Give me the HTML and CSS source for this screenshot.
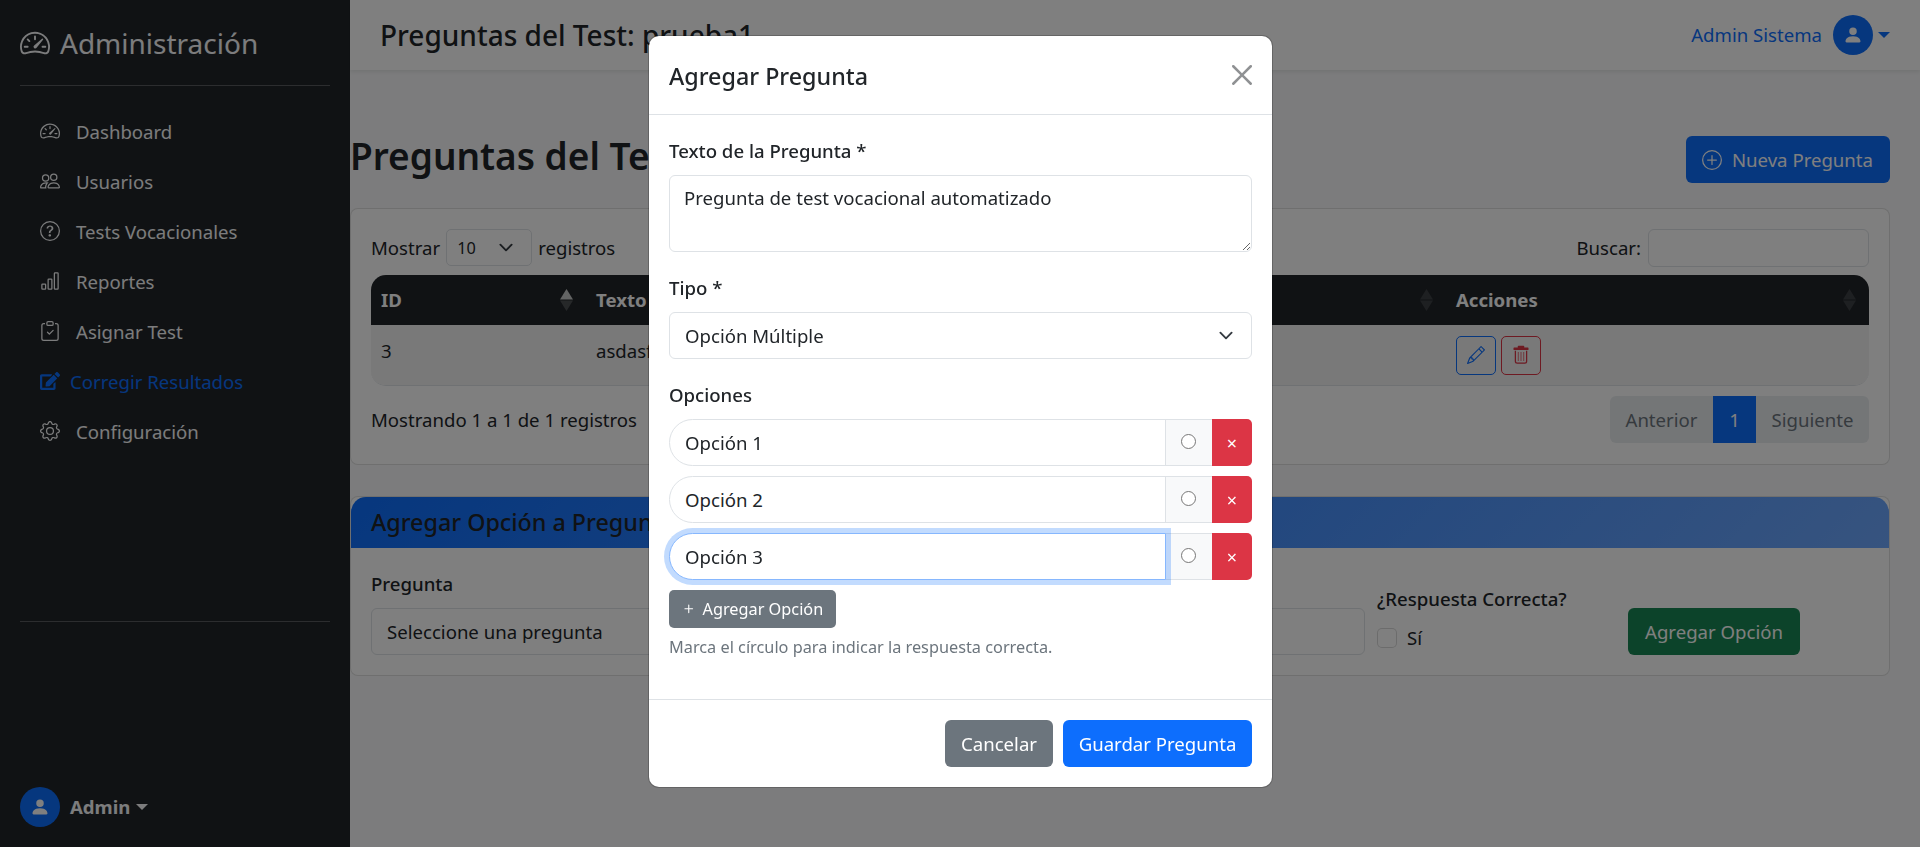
FILE: index.html
```html
<!DOCTYPE html>
<html lang="es">
<head>
    <meta charset="UTF-8">
    <meta name="viewport" content="width=device-width, initial-scale=1.0">
    <title>Preguntas del Test: prueba1</title>
    <link rel="stylesheet" href="styles.css">
</head>
<body>
    <svg class="sprite" xmlns="http://www.w3.org/2000/svg">
        <symbol id="i-speed" viewBox="0 0 16 16">
            <path d="M8 4a.5.5 0 0 1 .5.5V6a.5.5 0 0 1-1 0V4.5A.5.5 0 0 1 8 4zM3.732 5.732a.5.5 0 0 1 .707 0l.915.914a.5.5 0 1 1-.708.708l-.914-.915a.5.5 0 0 1 0-.707zM2 10a.5.5 0 0 1 .5-.5h1.586a.5.5 0 0 1 0 1H2.5A.5.5 0 0 1 2 10zm9.5 0a.5.5 0 0 1 .5-.5h1.5a.5.5 0 0 1 0 1H12a.5.5 0 0 1-.5-.5zm.754-4.246a.389.389 0 0 0-.527-.02L7.547 9.31a.91.91 0 1 0 1.302 1.258l3.434-4.297a.389.389 0 0 0-.029-.518z"/>
            <path fill-rule="evenodd" d="M0 10a8 8 0 1 1 15.547 2.661c-.442 1.253-1.845 1.602-2.932 1.25C11.309 13.488 9.475 13 8 13c-1.474 0-3.31.488-4.615.911-1.087.352-2.49.003-2.932-1.25A7.988 7.988 0 0 1 0 10zm8-7a7 7 0 0 0-6.603 9.329c.203.575.923.876 1.68.63C4.397 12.533 6.358 12 8 12s3.604.532 4.923.96c.757.245 1.477-.056 1.68-.631A7 7 0 0 0 8 3z"/>
        </symbol>
        <symbol id="i-people" viewBox="0 0 16 16">
            <path d="M15 14s1 0 1-1-1-4-5-4-5 3-5 4 1 1 1 1h8Zm-7.978-1A.261.261 0 0 1 7 12.996c.001-.264.167-1.03.76-1.72C8.312 10.629 9.282 10 11 10c1.717 0 2.687.63 3.24 1.276.593.69.758 1.457.76 1.72l-.008.002a.274.274 0 0 1-.014.002H7.022ZM11 7a2 2 0 1 0 0-4 2 2 0 0 0 0 4Zm3-2a3 3 0 1 1-6 0 3 3 0 0 1 6 0ZM6.936 9.28a5.88 5.88 0 0 0-1.23-.247A7.35 7.35 0 0 0 5 9c-4 0-5 3-5 4 0 .667.333 1 1 1h4.216A2.238 2.238 0 0 1 5 13c0-1.01.377-2.042 1.09-2.904.243-.294.526-.569.846-.816ZM4.92 10A5.493 5.493 0 0 0 4 13H1c0-.26.164-1.03.76-1.724.545-.636 1.492-1.256 3.16-1.275ZM1.5 5.5a3 3 0 1 1 6 0 3 3 0 0 1-6 0Zm3-2a2 2 0 1 0 0 4 2 2 0 0 0 0-4Z"/>
        </symbol>
        <symbol id="i-question" viewBox="0 0 16 16">
            <path d="M8 15A7 7 0 1 1 8 1a7 7 0 0 1 0 14zm0 1A8 8 0 1 0 8 0a8 8 0 0 0 0 16z"/>
            <path d="M5.255 5.786a.237.237 0 0 0 .241.247h.825c.138 0 .248-.113.266-.25.09-.656.54-1.134 1.342-1.134.686 0 1.314.343 1.314 1.168 0 .635-.374.927-.965 1.371-.673.489-1.206 1.06-1.168 1.987l.003.217a.25.25 0 0 0 .25.246h.811a.25.25 0 0 0 .25-.25v-.105c0-.718.273-.927 1.01-1.486.609-.463 1.244-.977 1.244-2.056 0-1.511-1.276-2.241-2.673-2.241-1.267 0-2.655.59-2.75 2.286zm1.557 5.763c0 .533.425.927 1.01.927.609 0 1.028-.394 1.028-.927 0-.552-.42-.94-1.029-.94-.584 0-1.009.388-1.009.94z"/>
        </symbol>
        <symbol id="i-chart" viewBox="0 0 16 16">
            <path d="M4 11H2v3h2v-3zm5-4H7v7h2V7zm5-5v12h-2V2h2zm-2-1a1 1 0 0 0-1 1v12a1 1 0 0 0 1 1h2a1 1 0 0 0 1-1V2a1 1 0 0 0-1-1h-2zM6 7a1 1 0 0 1 1-1h2a1 1 0 0 1 1 1v7a1 1 0 0 1-1 1H7a1 1 0 0 1-1-1V7zm-5 4a1 1 0 0 1 1-1h2a1 1 0 0 1 1 1v3a1 1 0 0 1-1 1H2a1 1 0 0 1-1-1v-3z"/>
        </symbol>
        <symbol id="i-clipboard" viewBox="0 0 16 16">
            <path fill-rule="evenodd" d="M10.854 7.146a.5.5 0 0 1 0 .708l-3 3a.5.5 0 0 1-.708 0l-1.5-1.5a.5.5 0 1 1 .708-.708L7.5 9.793l2.646-2.647a.5.5 0 0 1 .708 0z"/>
            <path d="M4 1.5H3a2 2 0 0 0-2 2V14a2 2 0 0 0 2 2h10a2 2 0 0 0 2-2V3.5a2 2 0 0 0-2-2h-1v1h1a1 1 0 0 1 1 1V14a1 1 0 0 1-1 1H3a1 1 0 0 1-1-1V3.5a1 1 0 0 1 1-1h1v-1z"/>
            <path d="M9.5 1a.5.5 0 0 1 .5.5v1a.5.5 0 0 1-.5.5h-3a.5.5 0 0 1-.5-.5v-1a.5.5 0 0 1 .5-.5h3zm-3-1A1.5 1.5 0 0 0 5 1.5v1A1.5 1.5 0 0 0 6.5 4h3A1.5 1.5 0 0 0 11 2.5v-1A1.5 1.5 0 0 0 9.5 0h-3z"/>
        </symbol>
        <symbol id="i-edit" viewBox="0 0 576 512">
            <path d="M402.6 83.2l90.2 90.2c3.8 3.8 3.8 10 0 13.8L274.4 405.6l-92.8 10.3c-12.4 1.4-22.9-9.1-21.5-21.5l10.3-92.8L388.8 83.2c3.8-3.8 10-3.8 13.8 0zm162-22.9l-48.8-48.8c-15.2-15.2-39.9-15.2-55.2 0l-35.4 35.4c-3.8 3.8-3.8 10 0 13.8l90.2 90.2c3.8 3.8 10 3.8 13.8 0l35.4-35.4c15.2-15.3 15.2-40 0-55.2zM384 346.2V448H64V128h229.8c3.2 0 6.2-1.3 8.5-3.5l40-40c7.6-7.6 2.2-20.5-8.5-20.5H48C21.5 64 0 85.5 0 112v352c0 26.5 21.5 48 48 48h352c26.5 0 48-21.5 48-48V306.2c0-10.7-12.9-16-20.5-8.5l-40 40c-2.2 2.3-3.5 5.3-3.5 8.5z"/>
        </symbol>
        <symbol id="i-gear" viewBox="0 0 16 16">
            <path d="M8 4.754a3.246 3.246 0 1 0 0 6.492 3.246 3.246 0 0 0 0-6.492zM5.754 8a2.246 2.246 0 1 1 4.492 0 2.246 2.246 0 0 1-4.492 0z"/>
            <path d="M9.796 1.343c-.527-1.79-3.065-1.79-3.592 0l-.094.319a.873.873 0 0 1-1.255.52l-.292-.16c-1.64-.892-3.433.902-2.54 2.541l.159.292a.873.873 0 0 1-.52 1.255l-.319.094c-1.79.527-1.79 3.065 0 3.592l.319.094a.873.873 0 0 1 .52 1.255l-.16.292c-.892 1.64.901 3.434 2.541 2.54l.292-.159a.873.873 0 0 1 1.255.52l.094.319c.527 1.79 3.065 1.79 3.592 0l.094-.319a.873.873 0 0 1 1.255-.52l.292.16c1.64.893 3.434-.902 2.54-2.541l-.159-.292a.873.873 0 0 1 .52-1.255l.319-.094c1.79-.527 1.79-3.065 0-3.592l-.319-.094a.873.873 0 0 1-.52-1.255l.16-.292c.893-1.64-.902-3.433-2.541-2.54l-.292.159a.873.873 0 0 1-1.255-.52l-.094-.319zm-2.633.283c.246-.835 1.428-.835 1.674 0l.094.319a1.873 1.873 0 0 0 2.693 1.115l.291-.16c.764-.415 1.6.42 1.184 1.185l-.159.292a1.873 1.873 0 0 0 1.116 2.692l.318.094c.835.246.835 1.428 0 1.674l-.319.094a1.873 1.873 0 0 0-1.115 2.693l.16.291c.415.764-.42 1.6-1.185 1.184l-.291-.159a1.873 1.873 0 0 0-2.693 1.116l-.094.318c-.246.835-1.428.835-1.674 0l-.094-.319a1.873 1.873 0 0 0-2.692-1.115l-.292.16c-.764.415-1.6-.42-1.184-1.185l.159-.291A1.873 1.873 0 0 0 1.945 8.93l-.319-.094c-.835-.246-.835-1.428 0-1.674l.319-.094A1.873 1.873 0 0 0 3.06 4.377l-.16-.292c-.415-.764.42-1.6 1.185-1.184l.292.159a1.873 1.873 0 0 0 2.692-1.115l.094-.319z"/>
        </symbol>
        <symbol id="i-person" viewBox="0 0 16 16">
            <path d="M3 14s-1 0-1-1 1-4 6-4 6 3 6 4-1 1-1 1H3Zm5-6a3 3 0 1 0 0-6 3 3 0 0 0 0 6Z"/>
        </symbol>
        <symbol id="i-plus-circle" viewBox="0 0 16 16">
            <path d="M8 15A7 7 0 1 1 8 1a7 7 0 0 1 0 14zm0 1A8 8 0 1 0 8 0a8 8 0 0 0 0 16z"/>
            <path d="M8 4a.5.5 0 0 1 .5.5v3h3a.5.5 0 0 1 0 1h-3v3a.5.5 0 0 1-1 0v-3h-3a.5.5 0 0 1 0-1h3v-3A.5.5 0 0 1 8 4z"/>
        </symbol>
        <symbol id="i-plus" viewBox="0 0 16 16">
            <path d="M8 4a.5.5 0 0 1 .5.5v3h3a.5.5 0 0 1 0 1h-3v3a.5.5 0 0 1-1 0v-3h-3a.5.5 0 0 1 0-1h3v-3A.5.5 0 0 1 8 4z"/>
        </symbol>
        <symbol id="i-pencil" viewBox="0 0 16 16">
            <path d="M12.146.146a.5.5 0 0 1 .708 0l3 3a.5.5 0 0 1 0 .708l-10 10a.5.5 0 0 1-.168.11l-5 2a.5.5 0 0 1-.65-.65l2-5a.5.5 0 0 1 .11-.168l10-10zM11.207 2.5 13.5 4.793 14.793 3.5 12.5 1.207 11.207 2.5zm1.586 3L10.5 3.207 4 9.707V10h.5a.5.5 0 0 1 .5.5v.5h.5a.5.5 0 0 1 .5.5v.5h.293l6.5-6.5zm-9.761 5.175-.106.106-1.528 3.821 3.821-1.528.106-.106A.5.5 0 0 1 5 12.5V12h-.5a.5.5 0 0 1-.5-.5V11h-.5a.5.5 0 0 1-.468-.325z"/>
        </symbol>
        <symbol id="i-trash" viewBox="0 0 16 16">
            <path d="M6 .6h4a.6.6 0 0 1 .6.6v.8h2.9a.5.5 0 0 1 .5.5v1a.5.5 0 0 1-.5.5h-11a.5.5 0 0 1-.5-.5v-1a.5.5 0 0 1 .5-.5h2.9v-.8A.6.6 0 0 1 6 .6Z"/>
            <path d="M3 4.5h1V13a1 1 0 0 0 1 1h6a1 1 0 0 0 1-1V4.5h1V13a2 2 0 0 1-2 2H5a2 2 0 0 1-2-2V4.5Z"/>
            <path opacity=".55" d="M5.4 5.6h1v7.2h-1zM7.5 5.6h1v7.2h-1zM9.6 5.6h1v7.2h-1z"/>
        </symbol>
        <symbol id="i-close" viewBox="0 0 16 16">
            <path d="M.293.293a1 1 0 0 1 1.414 0L8 6.586 14.293.293a1 1 0 1 1 1.414 1.414L9.414 8l6.293 6.293a1 1 0 0 1-1.414 1.414L8 9.414l-6.293 6.293a1 1 0 0 1-1.414-1.414L6.586 8 .293 1.707a1 1 0 0 1 0-1.414z"/>
        </symbol>
        <symbol id="i-sort" viewBox="0 0 13 22">
            <path opacity=".13" d="M6.5 0 13 10.5H0z"/>
            <path opacity=".13" d="M6.5 22 0 11.5h13z"/>
        </symbol>
        <symbol id="i-sort-asc" viewBox="0 0 13 22">
            <path opacity=".75" d="M6.5 0 13 10.5H0z"/>
            <path opacity=".2" d="M6.5 22 0 11.5h13z"/>
        </symbol>
    </svg>

    <div class="layout">
        <aside class="sidebar">
            <div class="brand">
                <svg class="icon brand-icon"><use href="#i-speed"/></svg>
                <span>Administración</span>
            </div>
            <hr class="side-rule">
            <nav class="side-nav">
                <a class="side-link" href="#"><svg class="icon"><use href="#i-speed"/></svg><span>Dashboard</span></a>
                <a class="side-link" href="#"><svg class="icon"><use href="#i-people"/></svg><span>Usuarios</span></a>
                <a class="side-link" href="#"><svg class="icon"><use href="#i-question"/></svg><span>Tests Vocacionales</span></a>
                <a class="side-link" href="#"><svg class="icon"><use href="#i-chart"/></svg><span>Reportes</span></a>
                <a class="side-link" href="#"><svg class="icon"><use href="#i-clipboard"/></svg><span>Asignar Test</span></a>
                <a class="side-link active" href="#"><svg class="icon"><use href="#i-edit"/></svg><span>Corregir Resultados</span></a>
                <a class="side-link" href="#"><svg class="icon"><use href="#i-gear"/></svg><span>Configuración</span></a>
            </nav>
            <hr class="side-rule">
            <div class="side-user">
                <span class="avatar"><svg class="icon"><use href="#i-person"/></svg></span>
                <strong>Admin</strong>
                <span class="caret"></span>
            </div>
        </aside>

        <div class="main">
            <header class="topbar">
                <h3 class="topbar-title">Preguntas del Test: prueba1</h3>
                <div class="topbar-user">
                    <span>Admin Sistema</span>
                    <span class="avatar"><svg class="icon"><use href="#i-person"/></svg></span>
                    <span class="caret caret-blue"></span>
                </div>
            </header>

            <div class="content">
                <div class="page-head">
                    <h1>Preguntas del Test: prueba1</h1>
                    <a class="btn btn-primary btn-new" href="#"><svg class="icon"><use href="#i-plus-circle"/></svg>Nueva Pregunta</a>
                </div>

                <section class="card">
                    <div class="card-body">
                        <div class="dt-row">
                            <label class="dt-length">Mostrar
                                <select class="form-select select-sm"><option>10</option></select>
                                registros</label>
                            <label class="dt-search">Buscar: <input class="form-control search-input" type="text"></label>
                        </div>
                        <div class="table-wrap">
                            <table class="table">
                                <thead>
                                    <tr>
                                        <th class="col-id"><div class="th-in">ID<svg class="sort"><use href="#i-sort-asc"/></svg></div></th>
                                        <th class="col-text"><div class="th-in">Texto<svg class="sort"><use href="#i-sort"/></svg></div></th>
                                        <th class="col-type"><div class="th-in">Tipo<svg class="sort"><use href="#i-sort"/></svg></div></th>
                                        <th><div class="th-in">Acciones<svg class="sort"><use href="#i-sort"/></svg></div></th>
                                    </tr>
                                </thead>
                                <tbody>
                                    <tr>
                                        <td>3</td>
                                        <td>asdasfasdf</td>
                                        <td>Opción Múltiple</td>
                                        <td>
                                            <div class="row-actions">
                                                <button class="btn-act act-edit"><svg class="icon"><use href="#i-pencil"/></svg></button>
                                                <button class="btn-act act-del"><svg class="icon"><use href="#i-trash"/></svg></button>
                                            </div>
                                        </td>
                                    </tr>
                                </tbody>
                            </table>
                        </div>
                        <div class="dt-foot">
                            <span>Mostrando 1 a 1 de 1 registros</span>
                            <div class="pager">
                                <a class="page-link page-prev" href="#">Anterior</a>
                                <a class="page-link current" href="#">1</a>
                                <a class="page-link page-next" href="#">Siguiente</a>
                            </div>
                        </div>
                    </div>
                </section>

                <section class="card card-option">
                    <div class="card-head">
                        <h5>Agregar Opción a Pregunta</h5>
                    </div>
                    <div class="card-body option-form">
                        <div class="field">
                            <label class="form-label">Pregunta</label>
                            <select class="form-select"><option>Seleccione una pregunta</option></select>
                        </div>
                        <div class="field">
                            <label class="form-label">Texto de la Opción</label>
                            <input class="form-control" type="text">
                        </div>
                        <div class="field">
                            <label class="form-label label-check">¿Respuesta Correcta?</label>
                            <label class="check-line"><input class="check" type="checkbox">Sí</label>
                        </div>
                        <button class="btn btn-success">Agregar Opción</button>
                    </div>
                </section>
            </div>
        </div>
    </div>

    <div class="backdrop"></div>

    <div class="modal">
        <div class="modal-head">
            <h5>Agregar Pregunta</h5>
            <svg class="icon btn-close"><use href="#i-close"/></svg>
        </div>
        <div class="modal-body">
            <label class="form-label">Texto de la Pregunta *</label>
            <textarea class="form-control area">Pregunta de test vocacional automatizado</textarea>

            <label class="form-label">Tipo *</label>
            <select class="form-select select-type"><option>Opción Múltiple</option></select>

            <label class="form-label">Opciones</label>
            <div class="option-list">
                <div class="option-row">
                    <input class="form-control option-input" type="text" value="Opción 1">
                    <span class="option-radio"><input type="radio" name="correcta"></span>
                    <button class="option-del">×</button>
                </div>
                <div class="option-row">
                    <input class="form-control option-input" type="text" value="Opción 2">
                    <span class="option-radio"><input type="radio" name="correcta"></span>
                    <button class="option-del">×</button>
                </div>
                <div class="option-row">
                    <input class="form-control option-input focused" type="text" value="Opción 3">
                    <span class="option-radio"><input type="radio" name="correcta"></span>
                    <button class="option-del">×</button>
                </div>
            </div>
            <button class="btn btn-secondary btn-sm"><svg class="icon"><use href="#i-plus"/></svg>Agregar Opción</button>
            <div class="help">Marca el círculo para indicar la respuesta correcta.</div>
        </div>
        <div class="modal-foot">
            <button class="btn btn-secondary btn-cancel">Cancelar</button>
            <button class="btn btn-primary btn-save">Guardar Pregunta</button>
        </div>
    </div>
</body>
</html>
```
FILE: styles.css
```css
* {
    box-sizing: border-box;
}

body {
    margin: 0;
    height: 847px;
    overflow: hidden;
    background: #f8f9fa;
    color: #212529;
    font-family: "Noto Sans", "Open Sans", sans-serif;
    font-size: 18.6px;
    line-height: 30px;
}

h1, h3, h5 {
    margin: 0;
}

a {
    text-decoration: none;
}

.sprite {
    display: none;
}

.icon {
    display: block;
    width: 20px;
    height: 20px;
    flex: none;
    fill: currentColor;
}

.layout {
    display: flex;
    height: 847px;
}

/* sidebar */
.sidebar {
    width: 350px;
    flex: none;
    display: flex;
    flex-direction: column;
    padding: 20px;
    background: #212529;
    color: #f8f9fa;
}

.brand {
    display: flex;
    align-items: center;
    gap: 10px;
    height: 45px;
    font-size: 28px;
    line-height: 45px;
}

.brand span {
    padding-top: 1px;
}

.brand-icon {
    width: 30px;
    height: 30px;
}

.side-rule {
    width: 100%;
    margin: 20px 0;
    border: 0;
    border-top: 1px solid rgba(255, 255, 255, .25);
}

.side-nav {
    height: 495px;
}

.side-link {
    display: flex;
    align-items: center;
    gap: 16px;
    height: 50px;
    padding: 0 20px;
    color: #f8f9fa;
}

.side-link span {
    padding-top: 2px;
}

.side-link.active {
    gap: 10px;
    color: #0d6efd;
}

.side-user {
    display: flex;
    align-items: center;
    margin-top: auto;
    gap: 10px;
}

.avatar {
    display: flex;
    align-items: center;
    justify-content: center;
    width: 40px;
    height: 40px;
    border-radius: 50%;
    background: #0d6efd;
    color: #fff;
}

.caret {
    width: 0;
    height: 0;
    margin-left: -4px;
    border-top: 6px solid currentColor;
    border-left: 6px solid transparent;
    border-right: 6px solid transparent;
}

.caret-blue {
    margin-left: -6px;
    color: #0d6efd;
}

/* main area */
.main {
    flex: 1;
    min-width: 0;
}

.topbar {
    display: flex;
    align-items: center;
    justify-content: space-between;
    height: 70px;
    padding: 0 30px;
    background: #fff;
    box-shadow: 0 2px 4px rgba(0, 0, 0, .08);
}

.topbar-title {
    font-size: 28px;
    font-weight: 500;
    line-height: 36px;
}

.topbar-user {
    display: flex;
    align-items: center;
    gap: 11px;
    color: #0d6efd;
}

.content {
    padding: 66px 30px 0 0;
}

.page-head {
    display: flex;
    align-items: center;
    justify-content: space-between;
    height: 47px;
    margin-bottom: 25px;
}

h1 {
    margin-top: -7px;
    font-size: 37px;
    font-weight: 600;
    line-height: 50px;
    white-space: nowrap;
}

.btn {
    display: inline-flex;
    align-items: center;
    justify-content: center;
    height: 47px;
    padding: 0 15px;
    border: 1px solid transparent;
    border-radius: 6px;
    font: inherit;
    color: #fff;
}

.btn-primary {
    background: #0d6efd;
}

.btn-secondary {
    background: #6c757d;
}

.btn-success {
    background: #198754;
}

.btn-new {
    gap: 10px;
    padding: 0 16px 0 15px;
}

.btn-cancel {
    width: 108px;
    padding: 0;
}

.btn-save {
    width: 189px;
    padding: 0;
}

.btn-sm {
    height: 38px;
    padding: 0 12px 0 10px;
    gap: 5px;
    font-size: 16.3px;
    border-radius: 5px;
}

.btn-sm .icon {
    width: 17.5px;
    height: 17.5px;
}

.card {
    border: 1px solid rgba(0, 0, 0, .125);
    border-radius: 8px;
    background: #fff;
}

.card-body {
    padding: 20px;
}

.card-option {
    margin-top: 31px;
}

.card-head {
    height: 51px;
    padding: 0 20px;
    border-radius: 15px 15px 0 0;
    background: linear-gradient(135deg, #0d6efd, #6ea8fe);
}

.card-head h5 {
    font-size: 23.3px;
    font-weight: 500;
    line-height: 51px;
}

/* forms */
.form-control,
.form-select {
    display: block;
    width: 100%;
    height: 47px;
    padding: 0 15px;
    border: 1px solid #dee2e6;
    border-radius: 6px;
    background-color: #fff;
    color: #212529;
    font: inherit;
    outline: none;
}

.form-select {
    appearance: none;
    padding-right: 45px;
    background-image: url("data:image/svg+xml,%3csvg xmlns='http://www.w3.org/2000/svg' viewBox='0 0 16 16'%3e%3cpath fill='none' stroke='%23343a40' stroke-linecap='round' stroke-linejoin='round' stroke-width='2' d='m2 5 6 6 6-6'/%3e%3c/svg%3e");
    background-repeat: no-repeat;
    background-position: right 15px center;
    background-size: 20px 15px;
}

.form-label {
    display: block;
    margin-bottom: 10px;
    font-weight: 500;
}

/* datatable */
.dt-row {
    display: flex;
    justify-content: space-between;
    align-items: center;
    height: 37px;
    margin-bottom: 9px;
}

.dt-length {
    display: flex;
    align-items: center;
    gap: 6px;
}

.select-sm {
    width: 86px;
    height: 37px;
    padding: 0 10px;
    font-size: 16.3px;
    border-radius: 5px;
}

.dt-search {
    display: flex;
    align-items: center;
    gap: 7px;
}

.search-input {
    width: 221px;
    height: 38px;
}

.table-wrap {
    overflow: hidden;
    border-bottom: 1px solid #dee2e6;
    border-radius: 15px;
}

.table {
    width: 100%;
    table-layout: fixed;
    border-collapse: collapse;
}

.table th {
    height: 50px;
    padding: 0 10px;
    background: #212529;
    color: #fff;
    text-align: left;
    font-weight: 700;
}

.col-id {
    width: 215px;
}

.col-text {
    width: 430px;
}

.col-type {
    width: 430px;
}

.th-in {
    display: flex;
    align-items: center;
    justify-content: space-between;
}

.sort {
    width: 13px;
    height: 22px;
    margin-right: 3px;
    fill: #fff;
}

.table td {
    height: 60px;
    padding: 0 10px 8px;
    background: #f2f2f2;
}

.row-actions {
    display: flex;
    gap: 5px;
    margin-top: 8px;
}

.btn-act {
    display: flex;
    align-items: center;
    justify-content: center;
    width: 40px;
    height: 39px;
    padding: 0;
    border: 1px solid;
    border-radius: 5px;
    background: transparent;
}

.act-edit {
    color: #0d6efd;
}

.act-edit .icon {
    width: 18px;
    height: 18px;
}

.act-del {
    color: #dc3545;
}

.dt-foot {
    display: flex;
    justify-content: space-between;
    align-items: center;
    margin: 10px 0 1px;
}

.pager {
    display: flex;
    height: 47px;
    border-radius: 6px;
    overflow: hidden;
    background: #e9ecef;
}

.page-link {
    display: flex;
    align-items: center;
    justify-content: center;
    width: 43px;
    color: #6c757d;
}

.page-prev {
    width: 103px;
}

.page-next {
    width: 113px;
}

.page-link.current {
    background: #0d6efd;
    color: #fff;
}

/* add option form */
.option-form {
    display: grid;
    grid-template-columns: 492px 490px 239px 172px;
    column-gap: 12px;
    align-items: end;
    padding-top: 21px;
}

.field .form-label {
    margin-bottom: 9px;
}

.field .label-check {
    margin-bottom: 10px;
}

.check-line {
    display: flex;
    align-items: center;
    gap: 10px;
    height: 27px;
    margin-bottom: 4px;
}

.check {
    appearance: none;
    width: 20px;
    height: 20px;
    margin: 0;
    border: 1px solid rgba(0, 0, 0, .15);
    border-radius: 5px;
    background: #fff;
}

/* modal */
.backdrop {
    position: fixed;
    inset: 0;
    background: rgba(0, 0, 0, .5);
}

.modal {
    position: absolute;
    top: 36px;
    left: calc(50% - 311px);
    width: 623px;
    height: 751px;
    display: flex;
    flex-direction: column;
    border-radius: 10px;
    background: #fff;
    box-shadow: 0 0 0 1px rgba(0, 0, 0, .2);
}

.modal-head {
    display: flex;
    align-items: center;
    justify-content: space-between;
    height: 79px;
    padding: 0 20px;
    border-bottom: 1px solid #dee2e6;
}

.modal-head h5 {
    padding-top: 2px;
    font-size: 23.3px;
    font-weight: 500;
    line-height: 36px;
}

.btn-close {
    opacity: .5;
}

.modal-body {
    flex: 1;
    padding: 21px 20px 20px;
}

.area {
    height: 77px;
    margin-top: -1px;
    padding: 7px 14px;
    margin-bottom: 21px;
    resize: vertical;
}

.select-type {
    margin-bottom: 21px;
}

.modal-body .form-label + .select-type {
    margin-top: -1px;
}

.option-list {
    display: flex;
    flex-direction: column;
    gap: 10px;
    margin-top: -1px;
    margin-bottom: 10px;
}

.option-row {
    display: flex;
    height: 47px;
}

.option-input {
    flex: 1;
    min-width: 0;
    border-radius: 24px 0 0 24px;
}

.option-input.focused {
    position: relative;
    z-index: 1;
    border-color: #86b7fe;
    box-shadow: 0 0 0 5px rgba(13, 110, 253, .25);
}

.option-radio {
    display: flex;
    align-items: center;
    justify-content: center;
    width: 47px;
    flex: none;
    margin-left: -1px;
    border: 1px solid #dee2e6;
    border-right: 0;
    background: #f8f9fa;
}

.option-radio input {
    width: 15px;
    height: 15px;
    margin: 0 1px 3px 0;
}

.option-del {
    width: 40px;
    flex: none;
    padding: 0;
    border: 0;
    border-radius: 0 5px 5px 0;
    background: #dc3545;
    color: #fff;
    font: inherit;
    font-size: 18px;
}

.help {
    margin-top: 6px;
    font-size: 16.3px;
    line-height: 26px;
    color: #6c757d;
}

.modal-foot {
    display: flex;
    justify-content: flex-end;
    gap: 10px;
    height: 88px;
    padding: 20px;
    border-top: 1px solid #dee2e6;
}
```
